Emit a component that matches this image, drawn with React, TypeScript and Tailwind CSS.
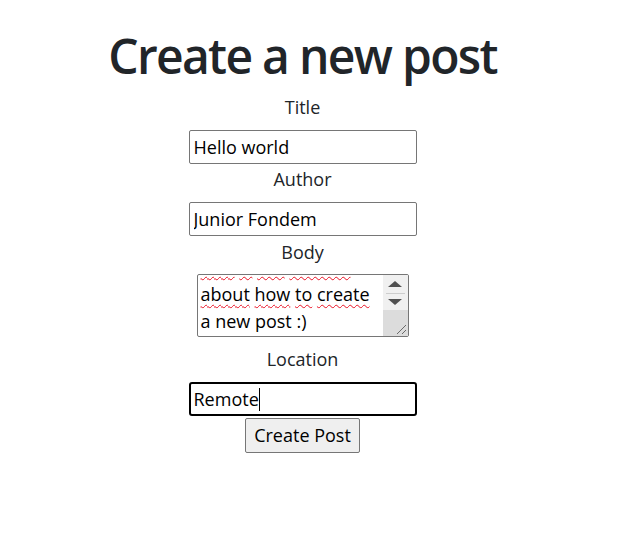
import { ChangeEvent, useState } from 'react';

// Simple "create post" form, styled like the default browser controls.
const font = { fontFamily: '"Open Sans", "Noto Sans", sans-serif' };

const App = () => {
    const [title, setTitle] = useState('Hello world');
    const [author, setAuthor] = useState('Junior Fondem');

    return (
        <div className="min-h-screen bg-white text-[#212529]" style={font}>
            <div className="flex w-[605px] flex-col items-center">
                <h1 className="mt-[31px] mb-[13px] text-[48px] leading-[49px] font-semibold tracking-[-1.7px]">
                    Create a new post
                </h1>

                <label className="mt-[1px] text-[18px] leading-[27px]">Title</label>
                <input
                    className="mt-[9px] h-[34px] w-[228px] rounded-[2px] border border-[#767676] px-[4px] text-[18px] text-black outline-none"
                    value={title}
                    onChange={(e: ChangeEvent<HTMLInputElement>) => setTitle(e.target.value)}
                />

                <label className="mt-[2px] text-[18px] leading-[27px]">Author</label>
                <input
                    className="mt-[9px] h-[34px] w-[228px] rounded-[2px] border border-[#767676] px-[4px] text-[18px] text-black outline-none"
                    value={author}
                    onChange={(e: ChangeEvent<HTMLInputElement>) => setAuthor(e.target.value)}
                />

                <label className="mt-[3px] text-[18px] leading-[27px]">Body</label>
                {/* fake textarea so the scroll position and spellcheck marks show */}
                <div className="relative mt-[8px] h-[63px] w-[212px] overflow-hidden rounded-[2px] border border-[#767676] text-[18px] leading-[27.5px] text-black">
                    <div className="-mt-[22px] pl-[3px] pr-[26px]">
                        <div className="whitespace-nowrap">
                            <Word>This</Word> <Word>is</Word> <Word>the</Word> <Word>tutorial</Word>
                        </div>
                        <div className="whitespace-nowrap">
                            <Word>about</Word> <Word>how</Word> <Word>to</Word> <Word>create</Word>
                        </div>
                        <div className="whitespace-nowrap">a new post :)</div>
                    </div>
                    <div className="absolute top-0 right-0 bottom-0 flex w-[25px] flex-col bg-[#f0f0f0]">
                        <div className="flex h-[18px] items-center justify-center">
                            <svg width="14" height="6" viewBox="0 0 14 6">
                                <path d="M7 0 L14 6 L0 6 Z" fill="#505050" />
                            </svg>
                        </div>
                        <div className="mx-[3px] h-px bg-[#cdcdcd]" />
                        <div className="flex h-[16px] items-center justify-center">
                            <svg width="14" height="6" viewBox="0 0 14 6">
                                <path d="M0 0 L14 0 L7 6 Z" fill="#505050" />
                            </svg>
                        </div>
                        <div className="relative flex-1 bg-[#dcdcdc]">
                            <svg className="absolute right-[1px] bottom-[1px]" width="12" height="12" viewBox="0 0 12 12">
                                <path d="M11 2 L2 11 M11 7 L7 11" stroke="#6a6a6a" strokeWidth="1" />
                            </svg>
                        </div>
                    </div>
                </div>

                <label className="mt-[9px] text-[18px] leading-[27px]">Location</label>
                <div className="mt-[9px] flex h-[34px] w-[228px] items-center rounded-[3px] border-2 border-black px-[3px] text-[18px] text-black">
                    <span>Remote</span>
                    <span className="inline-block h-[23px] w-px bg-black" />
                </div>

                <button className="mt-[2px] h-[35px] w-[115px] rounded-[2px] border border-[#767676] bg-[#efefef] text-[18px] text-black">
                    Create Post
                </button>
            </div>
        </div>
    );
};

const Word = ({ children }: { children: string }) => (
    <span className="underline decoration-[#e81123] decoration-wavy decoration-1 underline-offset-[3px]">{children}</span>
);

export default App;
